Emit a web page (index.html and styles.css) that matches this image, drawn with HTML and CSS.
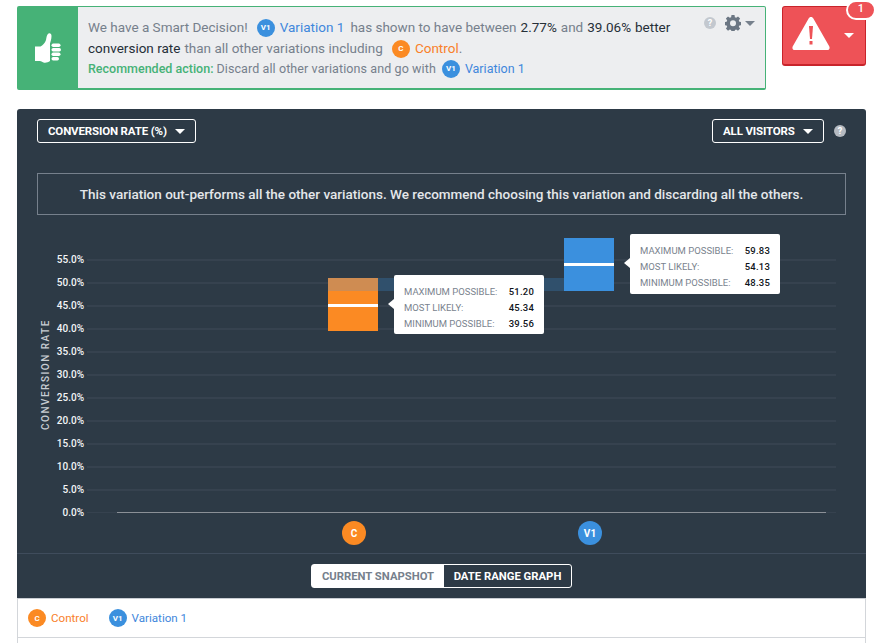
FILE: index.html
```html
<!DOCTYPE html>
<html lang="en">
<head>
<meta charset="utf-8">
<title>Smart Decision</title>
<link rel="stylesheet" href="styles.css">
</head>
<body>
<div class="top">
  <section class="alert">
    <div class="alert-icon">
      <svg width="26" height="30" viewBox="0 0 26 30"><path fill="#fff" d="M0 13.500h5.500c2-1 4.500-3.500 5.500-6.500.5-2 .5-5 2.500-6.500 1.500-.8 3 .3 3 2.500 0 3-1 6-1.500 7.500v1v16.500c-2 1.500-4.500 2-6.500 1.500-1.500-.5-2.500-1.500-3.500-1.500H0z"/><rect fill="#fff" x="16.500" y="10.500" width="9" height="3.500" rx="1.700"/><rect fill="#fff" x="16.500" y="15" width="9.500" height="3.500" rx="1.700"/><rect fill="#fff" x="16.500" y="19.500" width="9" height="3.500" rx="1.700"/><rect fill="#fff" x="16.500" y="24" width="7.500" height="3.500" rx="1.700"/></svg>
    </div>
    <div class="alert-body">
      <p class="line"><span>We have a Smart Decision!</span> <i class="dot blue sm">V1</i> <span class="tblue">Variation 1</span> <span class="gap">has shown to have between</span> <b>2.77%</b> and <b>39.06%</b> <b>better</b></p>
      <p class="line"><b>conversion rate</b> than all other variations including <i class="dot orange sm">C</i> <span><span class="torange">Control</span>.</span></p>
      <p class="line small"><strong>Recommended action:</strong> Discard all other variations and go with <i class="dot blue sm">V1</i> <span class="tblue">Variation 1</span></p>
      <div class="alert-tools">
        <span class="help light">?</span>
        <svg class="gear" width="16" height="16" viewBox="0 0 16 16"><path fill="#6b7683" fill-rule="evenodd" d="M6.500 0h3l.4 2.200 1.300.6L13 1.500l2.100 2.100-1.300 1.800.6 1.300 2.200.4v3l-2.200.4-.6 1.300 1.300 1.800-2.100 2.100-1.800-1.300-1.300.6-.4 2.200h-3l-.4-2.200-1.300-.6L3 15.700.900 13.600l1.300-1.800-.6-1.300L-.6 10.100v-3l2.200-.4.600-1.300L.900 3.600 3 1.500l1.800 1.300 1.300-.6zM8 5.300a3 3 0 1 0 0 6 3 3 0 0 0 0-6z"/></svg>
        <span class="caret grey"></span>
      </div>
    </div>
  </section>
  <div class="warn">
    <svg width="38" height="34" viewBox="0 0 38 34"><path fill="#fff" d="M19 0c1 0 2 .7 2.500 1.700l15.700 27.500c1 1.800 0 3.800-2 3.800H2.800c-2 0-3-2-2-3.800L16.500 1.700C17 .7 18 0 19 0z"/><path fill="#ee5257" d="M17 9h4l-1 13h-2z"/><rect fill="#ee5257" x="17.500" y="24" width="3" height="3.500"/></svg>
    <span class="caret white"></span>
    <span class="badge">1</span>
  </div>
</div>

<section class="panel">
  <div class="toolbar">
    <button class="select wide">CONVERSION RATE (%)<span class="caret white"></span></button>
    <div class="toolbar-right">
      <button class="select narrow">ALL VISITORS<span class="caret white"></span></button>
      <span class="help mid">?</span>
    </div>
  </div>
  <p class="notice">This variation out-performs all the other variations. We recommend choosing this variation and discarding all the others.</p>
  <div class="chart">
    <div class="axis-title">CONVERSION RATE</div>
    <div class="grid">
      <div class="row"><span>55.0%</span><i></i></div>
      <div class="row"><span>50.0%</span><i></i></div>
      <div class="row"><span>45.0%</span><i></i></div>
      <div class="row"><span>40.0%</span><i></i></div>
      <div class="row"><span>35.0%</span><i></i></div>
      <div class="row"><span>30.0%</span><i></i></div>
      <div class="row"><span>25.0%</span><i></i></div>
      <div class="row"><span>20.0%</span><i></i></div>
      <div class="row"><span>15.0%</span><i></i></div>
      <div class="row"><span>10.0%</span><i></i></div>
      <div class="row"><span>5.0%</span><i></i></div>
      <div class="row zero"><span>0.0%</span><i></i></div>
    </div>
    <div class="bar bar-c"><i></i></div>
    <div class="bar bar-v"><i></i></div>
    <div class="band"></div>
    <div class="tip tip-c">
      <div><span>MAXIMUM POSSIBLE:</span><b>51.20</b></div>
      <div><span>MOST LIKELY:</span><b>45.34</b></div>
      <div><span>MINIMUM POSSIBLE:</span><b>39.56</b></div>
    </div>
    <div class="tip tip-v">
      <div><span>MAXIMUM POSSIBLE:</span><b>59.83</b></div>
      <div><span>MOST LIKELY:</span><b>54.13</b></div>
      <div><span>MINIMUM POSSIBLE:</span><b>48.35</b></div>
    </div>
    <i class="dot orange lg mark-c">C</i>
    <i class="dot blue lg mark-v">V1</i>
  </div>
  <div class="switch">
    <div class="toggle">
      <span class="on">CURRENT SNAPSHOT</span>
      <span class="off">DATE RANGE GRAPH</span>
    </div>
  </div>
</section>

<div class="legend">
  <span class="item"><i class="dot orange md">C</i><span class="torange">Control</span></span>
  <span class="item"><i class="dot blue md">V1</i><span class="tblue">Variation 1</span></span>
</div>
<div class="below"></div>
</body>
</html>
```
FILE: styles.css
```css
* { box-sizing: border-box; }
html, body { margin: 0; height: 643px; overflow: hidden; }
body {
  background: #fff;
  padding: 6px 14px 0 17px;
  font-family: Roboto, "Liberation Sans", sans-serif;
  color: #76808c;
}
p { margin: 0; }
i { font-style: normal; }

.top { display: flex; justify-content: space-between; align-items: flex-start; height: 84px; }

.alert {
  width: 749px; height: 84px;
  display: flex;
  border: 1px solid #46b277;
  border-width: 1px 1px 2px 1px;
  border-radius: 2px;
  background: #edeef0;
}
.alert-icon {
  width: 60px; flex: none;
  background: #46b277;
  display: flex; align-items: center; justify-content: center;
  padding-top: 1px;
}
.alert-body { position: relative; flex: 1; padding: 10px 0 0 10px; }
.line { font-size: 13.500px; line-height: 21px; height: 21px; white-space: nowrap; display: flex; align-items: center; gap: 4px; }
.line.small { font-size: 12.500px; line-height: 19px; height: 19px; letter-spacing: .1px; gap: 3px; }
.line b { font-weight: 400; color: #262f38; }
.line strong { font-weight: 500; color: #46b277; letter-spacing: 0; }
.gap { margin-left: 2px; }
.tblue { color: #3f87dc; }
.torange { color: #f9802a; }
.line .tblue { letter-spacing: 0; }

.dot {
  display: inline-flex; align-items: center; justify-content: center;
  border-radius: 50%; color: #fff; font-weight: 700;
}
.dot.blue { background: #3b90de; }
.dot.orange { background: #fb8a23; }
.dot.sm { width: 18px; height: 18px; font-size: 8px; margin: 0 1px 0 5px; letter-spacing: 0; }
.line.small .dot.sm { margin: 0 2px 0 3px; }
.dot.md { width: 18px; height: 18px; font-size: 8px; }
.dot.lg { width: 24px; height: 24px; font-size: 10px; }

.alert-tools { position: absolute; top: 8px; right: 10px; display: flex; align-items: center; gap: 9px; }
.help {
  display: inline-flex; align-items: center; justify-content: center;
  width: 12px; height: 12px; border-radius: 50%;
  color: #fff; font-size: 9px; font-weight: 700;
}
.help.light { background: #c3c8cf; }
.help.mid { background: #b5bac1; }
.gear { margin-right: -5px; }

.caret { display: inline-block; flex: none; width: 0; height: 0; border-style: solid; border-width: 5px 5px 0; border-color: transparent; }
.caret.white { border-top-color: #fff; }
.caret.grey { border-top-color: #76808c; }

.warn {
  position: relative;
  width: 84px; height: 60px;
  background: #ee5257;
  border: 1px solid #c8242b;
  border-width: 1px 1px 2px 1px;
  border-radius: 3px;
  display: flex; align-items: center;
  padding: 0 0 4px 9px;
  gap: 14px;
}
.warn .caret { margin-top: 4px; }
.badge {
  position: absolute; top: -7px; right: -11px;
  width: 30px; height: 20px;
  background: #ee5257; border: 2px solid #fff; border-radius: 10px;
  color: #fff; font-size: 11px; font-weight: 500;
  display: flex; align-items: center; justify-content: center;
  padding-bottom: 3px;
}

.panel {
  margin-top: 19px;
  height: 489px;
  background: #2d3a46;
  border-radius: 3px 3px 0 0;
  display: flex; flex-direction: column;
  padding-top: 10px;
}
.toolbar { display: flex; justify-content: space-between; padding: 0 20px; height: 24px; }
.toolbar-right { display: flex; align-items: center; gap: 10px; }
.select {
  height: 24px;
  display: flex; align-items: center; justify-content: space-between;
  padding: 0 10px;
  background: transparent;
  border: 1px solid #fff; border-radius: 3px;
  color: #fff;
  font: 700 11.500px Roboto, sans-serif;
  letter-spacing: -.15px;
  white-space: nowrap;
}
.select.wide { width: 159px; }
.select.narrow { width: 112px; }
.notice {
  margin: 30px 20px 0;
  height: 42px;
  border: 1px solid #76808c;
  display: flex; align-items: center; justify-content: center;
  color: #e4e7ea;
  font-size: 13.500px; font-weight: 500;
}

.chart { position: relative; height: 339px; border-bottom: 1px solid #3f4c5c; }
.axis-title {
  position: absolute; left: 22px; top: 104px; width: 14px; height: 112px;
  writing-mode: vertical-rl; transform: rotate(180deg);
  font-size: 10px; font-weight: 500; letter-spacing: 1.500px;
  color: #c8cdd3; text-align: center; white-space: nowrap;
  line-height: 14px;
}
.grid { position: absolute; left: 0; right: 0; top: 33px; padding-right: 30px; }
.row { height: 23px; display: flex; align-items: center; }
.row span { width: 67px; text-align: right; color: #f3f5f7; font-size: 10px; font-weight: 500; }
.row i { flex: 1; height: 2px; margin-left: 3px; background: #36424f; }
.row.zero i { height: 1px; background: linear-gradient(to right, #36424f 30px, #8b9097 30px, #8b9097 739px, #36424f 739px); }

.bar { position: absolute; width: 50px; height: 53px; }
.bar i { display: block; height: 3px; background: #fff; }
.bar-c { left: 311px; top: 63px; background: #fb8a23; padding-top: 26px; }
.bar-v { left: 547px; top: 23px; background: #3b90de; padding-top: 25px; }
.band {
  position: absolute; left: 311px; top: 63px; width: 236px; height: 13px;
  background: linear-gradient(to right, #cf8c52 50px, #30506c 50px);
}

.tip {
  position: absolute; width: 150px;
  background: #fff; border-radius: 2px;
  padding: 9px 10px 0;
  font-size: 9.500px; line-height: 16px;
  color: #7a838e;
}
.tip div { display: flex; justify-content: space-between; }
.tip b { color: #10151b; font-weight: 500; letter-spacing: .2px; }
.tip::before {
  content: ""; position: absolute; left: -6px; top: 24px;
  border-style: solid; border-width: 5px 6px 5px 0;
  border-color: transparent #fff transparent transparent;
}
.tip-c { left: 377px; top: 60px; height: 59px; }
.tip-v { left: 613px; top: 19px; height: 60px; }

.mark-c { position: absolute; left: 325px; top: 306px; }
.mark-v { position: absolute; left: 561px; top: 306px; }

.switch { display: flex; justify-content: center; padding-top: 10px; }
.toggle { display: flex; height: 24px; border: 1px solid #fff; border-radius: 3px; font-size: 11.300px; font-weight: 700; white-space: nowrap; }
.toggle span { display: flex; align-items: center; justify-content: center; }
.toggle .on { background: #fff; color: #76808c; width: 132px; }
.toggle .off { color: #fff; width: 127px; }

.legend {
  height: 40px;
  display: flex; align-items: center; gap: 20px;
  padding: 0 10px;
  border: 1px solid #d3d6da; border-top: 1px solid #c9cdd3;
  font-size: 11.600px;
}
.item { display: flex; align-items: center; gap: 5px; }
.below { height: 6px; border-left: 1px solid #d3d6da; border-right: 1px solid #d3d6da; }
```
